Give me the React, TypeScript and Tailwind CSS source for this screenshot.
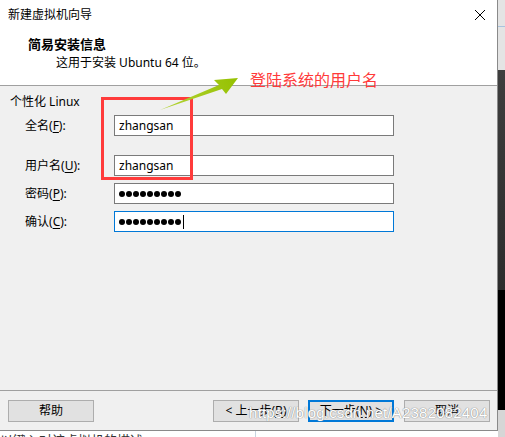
import React from "react";

const font = { fontFamily: '"Noto Sans", "Noto Sans CJK SC", sans-serif' };

function Label({ text, hot }: { text: string; hot: string }) {
  return (
    <span className="w-[89px] shrink-0">
      {text}(<span className="underline underline-offset-2">{hot}</span>):
    </span>
  );
}

function Field({ value, focused, password }: { value: string; focused?: boolean; password?: boolean }) {
  return (
    <div
      className={`w-[280px] h-[21px] bg-white border flex items-center px-[4px] ${
        focused ? "border-[#0078d7]" : "border-[#7a7a7a]"
      }`}
    >
      {password ? (
        <span className="flex items-center gap-[1px]">
          {Array.from({ length: 9 }).map((_, i) => (
            <span key={i} className="w-[6px] h-[6px] rounded-full bg-black" />
          ))}
          {focused && <span className="ml-[1px] w-[1px] h-[14px] bg-black" />}
        </span>
      ) : (
        <span className="text-[12px] text-black">{value}</span>
      )}
    </div>
  );
}

function Btn({ children, primary, className }: { children: React.ReactNode; primary?: boolean; className?: string }) {
  return (
    <div
      className={`w-[86px] h-[22px] flex items-center justify-center bg-[#e1e1e1] text-[12px] text-black ${
        primary ? "border-2 border-[#0078d7]" : "border border-[#adadad]"
      } ${className ?? ""}`}
    >
      {children}
    </div>
  );
}

export default function App() {
  return (
    <div className="relative w-[505px] h-[437px] overflow-hidden bg-white flex text-[12px] text-black" style={font}>
      <div className="w-[498px] flex flex-col">
        {/* 对话框 */}
        <div className="w-[498px] h-[431px] flex flex-col border-r border-b border-[#8a8a8a] shadow-[1px_1px_3px_rgba(0,0,0,0.3)]">
          {/* 标题栏 */}
          <div className="h-[29px] bg-white flex items-center justify-between pl-[8px] pr-[10px]">
            <span className="text-[12px] leading-none">新建虚拟机向导</span>
            <svg width="12" height="12" viewBox="0 0 12 12" className="mr-[1px]">
              <path d="M1 1L11 11M11 1L1 11" stroke="#000" strokeWidth="1" />
            </svg>
          </div>

          {/* 页头 */}
          <div className="h-[56px] bg-white pl-[28px] pt-[8px]">
            <div className="font-bold text-[13px] leading-[15px]">简易安装信息</div>
            <div className="pl-[28px] mt-[3px] text-[12px] leading-[15px]">这用于安装 Ubuntu 64 位。</div>
          </div>
          <div className="h-px bg-[#a0a0a0]" />

          {/* 内容 */}
          <div className="flex-1 bg-[#f0f0f0] pl-[10px] pt-[8px]">
            <div className="leading-[16px]">个性化 Linux</div>
            <div className="pl-[15px] mt-[5px] flex flex-col">
              <div className="flex items-center h-[21px]">
                <Label text="全名" hot="F" />
                <Field value="zhangsan" />
              </div>
              <div className="flex items-center h-[21px] mt-[19px]">
                <Label text="用户名" hot="U" />
                <Field value="zhangsan" />
              </div>
              <div className="flex items-center h-[21px] mt-[7px]">
                <Label text="密码" hot="P" />
                <Field value="" password />
              </div>
              <div className="flex items-center h-[21px] mt-[7px]">
                <Label text="确认" hot="C" />
                <Field value="" password focused />
              </div>
            </div>
          </div>

          <div className="h-px bg-[#a0a0a0]" />
          {/* 按钮 */}
          <div className="h-[39px] bg-[#f0f0f0] flex items-start pt-[9px] pl-[8px]">
            <Btn>帮助</Btn>
            <Btn className="ml-[119px]">&lt; 上一步(<span className="underline underline-offset-2">B</span>)</Btn>
            <Btn primary className="ml-[9px]">下一步(<span className="underline underline-offset-2">N</span>) &gt;</Btn>
            <Btn className="ml-[10px]">取消</Btn>
          </div>
        </div>

        {/* 背后的窗口 */}
        <div className="h-[6px] overflow-hidden flex bg-white">
          <div className="w-[256px] border-r border-[#c8d4e0] pt-[1px]">
            <span className="text-[13px] leading-[13px] text-[#333]">以键入对该虚拟机的描述</span>
          </div>
        </div>
      </div>

      {/* 右侧背景 */}
      <div className="flex-1 flex flex-col">
        <div className="h-[26px] bg-[#e4e4e4]" />
        <div className="h-px bg-[#a9c3de]" />
        <div className="h-[43px] bg-[#e4e4e4]" />
        <div className="h-[220px] bg-gradient-to-b from-[#3e3e3e] to-[#2c2c2c]" />
        <div className="h-[120px] bg-black" />
        <div className="flex-1 bg-[#d6d6d6]" />
      </div>

      {/* 标注 */}
      <div className="absolute left-[101px] top-[97px] w-[92px] h-[83px] border-[3px] border-[#ff3b3b]" />
      <svg className="absolute left-0 top-0" width="505" height="437" viewBox="0 0 505 437">
        <defs>
          <linearGradient id="g" x1="160" y1="110" x2="238" y2="78" gradientUnits="userSpaceOnUse">
            <stop offset="0" stopColor="#b5d43a" />
            <stop offset="1" stopColor="#95c100" />
          </linearGradient>
        </defs>
        <polygon points="160,110 219,85 214,80 238,78 226,94 222,89" fill="url(#g)" />
      </svg>
      <div className="absolute left-[250px] top-[70px] text-[16px] leading-[20px] text-[#ff3a3a]">登陆系统的用户名</div>

      {/* 水印 */}
      <div
        className="absolute left-[249px] top-[403px] text-[15px] leading-[20px] text-white tracking-[0.2px]"
        style={{ fontFamily: '"Liberation Sans", sans-serif', textShadow: "0 0 1px #8a8a8a, 0 0 1px #8a8a8a" }}
      >
        https://blog.csdn.net/A2382082404
      </div>
    </div>
  );
}
